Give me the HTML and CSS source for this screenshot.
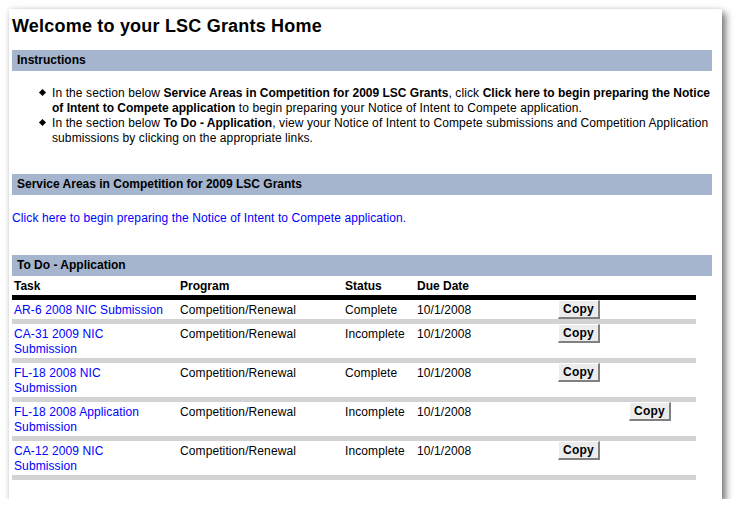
FILE: index.html
```html
<!DOCTYPE html>
<html>
<head>
<meta charset="utf-8">
<title>LSC Grants Home</title>
<link rel="stylesheet" href="styles.css">
</head>
<body>
<div class="page">
  <h1 class="title">Welcome to your LSC Grants Home</h1>

  <div class="bar bar-instructions">Instructions</div>
  <ul class="instructions">
    <li>In the section below <b>Service Areas in Competition for 2009 LSC Grants</b>, click <b>Click here to begin preparing the Notice of Intent to Compete application</b> to begin preparing your Notice of Intent to Compete application.</li>
    <li>In the section below <b>To Do - Application</b>, view your Notice of Intent to Compete submissions and Competition Application submissions by clicking on the appropriate links.</li>
  </ul>

  <div class="bar bar-service">Service Areas in Competition for 2009 LSC Grants</div>
  <p class="begin"><a href="#">Click here to begin preparing the Notice of Intent to Compete application.</a></p>

  <div class="bar bar-todo">To Do - Application</div>
  <table class="tasks">
    <colgroup>
      <col class="c-task"><col class="c-prog"><col class="c-status"><col class="c-due"><col class="c-copy1"><col class="c-copy2">
    </colgroup>
    <thead>
      <tr><th>Task</th><th>Program</th><th>Status</th><th>Due Date</th><th></th><th></th></tr>
      <tr class="rule-black"><td colspan="6"></td></tr>
    </thead>
    <tbody>
      <tr>
        <td class="task"><a href="#">AR-6 2008 NIC Submission</a></td>
        <td>Competition/Renewal</td><td>Complete</td><td>10/1/2008</td>
        <td class="btn-cell"><button class="copy">Copy</button></td><td class="btn-cell"></td>
      </tr>
      <tr class="rule"><td colspan="6"></td></tr>
      <tr>
        <td class="task"><a href="#">CA-31 2009 NIC Submission</a></td>
        <td>Competition/Renewal</td><td>Incomplete</td><td>10/1/2008</td>
        <td class="btn-cell"><button class="copy">Copy</button></td><td class="btn-cell"></td>
      </tr>
      <tr class="rule"><td colspan="6"></td></tr>
      <tr>
        <td class="task"><a href="#">FL-18 2008 NIC Submission</a></td>
        <td>Competition/Renewal</td><td>Complete</td><td>10/1/2008</td>
        <td class="btn-cell"><button class="copy">Copy</button></td><td class="btn-cell"></td>
      </tr>
      <tr class="rule"><td colspan="6"></td></tr>
      <tr>
        <td class="task"><a href="#">FL-18 2008 Application Submission</a></td>
        <td>Competition/Renewal</td><td>Incomplete</td><td>10/1/2008</td>
        <td class="btn-cell"></td><td class="btn-cell"><button class="copy">Copy</button></td>
      </tr>
      <tr class="rule"><td colspan="6"></td></tr>
      <tr>
        <td class="task"><a href="#">CA-12 2009 NIC Submission</a></td>
        <td>Competition/Renewal</td><td>Incomplete</td><td>10/1/2008</td>
        <td class="btn-cell"><button class="copy">Copy</button></td><td class="btn-cell"></td>
      </tr>
      <tr class="rule"><td colspan="6"></td></tr>
    </tbody>
  </table>
</div>
</body>
</html>
```

FILE: styles.css
```css
html, body {
  margin: 0;
  padding: 0;
  background: #ffffff;
}

body {
  font-family: "Liberation Sans", Arial, sans-serif;
  font-size: 12px;
  line-height: 15px;
  letter-spacing: 0.1px;
  color: #000000;
}

b {
  letter-spacing: 0;
}

.page {
  margin: 9px 0 0 9px;
  width: 700px;
  height: 490px;
  padding: 0 10px 0 3px;
  background: #ffffff;
  box-shadow: 4px 4px 7px rgba(0, 0, 0, 0.5), 0 0 5px rgba(0, 0, 0, 0.12);
  overflow: hidden;
}

.title {
  margin: 0;
  padding-top: 6px;
  font-size: 18px;
  line-height: 22px;
  font-weight: bold;
  letter-spacing: 0.2px;
}

.bar {
  background: #a4b5cd;
  height: 21px;
  line-height: 21px;
  padding-left: 5px;
  font-weight: bold;
  letter-spacing: 0;
}

.bar-instructions {
  margin-top: 13px;
}

.instructions {
  list-style: none;
  margin: 15px 0 0;
  padding: 0 0 0 40px;
}

.instructions li {
  position: relative;
}

.instructions li::before {
  content: "";
  position: absolute;
  left: -12px;
  top: 4px;
  width: 5px;
  height: 5px;
  background: #000000;
  transform: rotate(45deg);
}

.bar-service {
  margin-top: 28px;
}

.begin {
  margin: 16px 0 0;
}

a {
  color: #0000ff;
  text-decoration: none;
}

.bar-todo {
  margin-top: 29px;
}

.tasks {
  width: 684px;
  border-collapse: collapse;
  table-layout: fixed;
}

.c-task { width: 166px; }
.c-prog { width: 165px; }
.c-status { width: 72px; }
.c-due { width: 143px; }
.c-copy1 { width: 71px; }
.c-copy2 { width: 67px; }

.tasks th {
  text-align: left;
  font-weight: bold;
  letter-spacing: 0;
  padding: 3px 2px 1px;
  vertical-align: top;
}

.tasks td {
  padding: 3px 2px 1px;
  vertical-align: top;
}

.tasks td.task {
  padding-right: 12px;
}

.tasks td.btn-cell {
  padding: 0;
}

.tasks tr.rule-black td {
  height: 5px;
  padding: 0;
  background: #000000;
}

.tasks tr.rule td {
  height: 5px;
  padding: 0;
  background: #d3d3d3;
}

.copy {
  display: block;
  width: 42px;
  height: 19px;
  margin: 0;
  padding: 0;
  font-family: "Liberation Sans", Arial, sans-serif;
  font-size: 12px;
  font-weight: bold;
  letter-spacing: 0.2px;
  color: #000000;
  background: #ececec;
  border-style: solid;
  border-width: 1px 2px 2px 1px;
  border-color: #ffffff #808080 #808080 #ffffff;
  line-height: 15px;
}
```
